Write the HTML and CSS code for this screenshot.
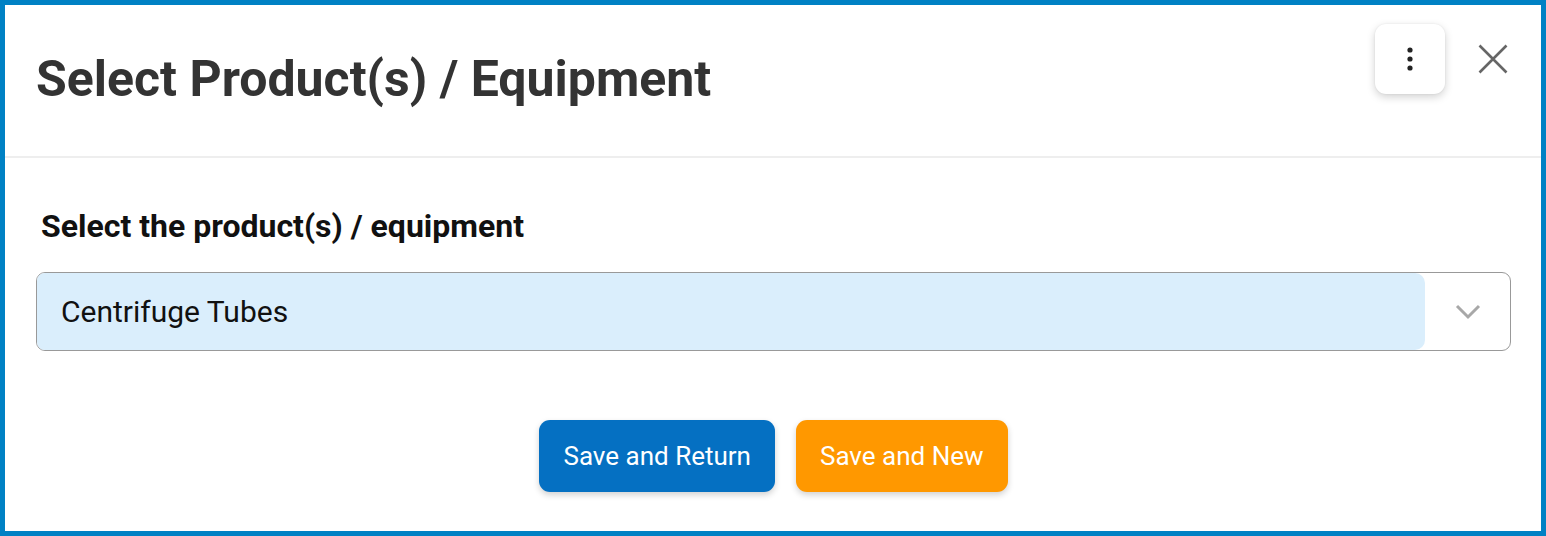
FILE: index.html
```html
<!DOCTYPE html>
<html>
<head>
<meta charset="utf-8">
<link rel="stylesheet" href="styles.css">
</head>
<body>
<div class="dialog">
  <header class="dialog-header">
    <h1 class="dialog-title">Select Product(s) / Equipment</h1>
    <div class="header-actions">
      <button class="menu-btn" aria-label="More">
        <svg width="6" height="24" viewBox="0 0 6 24"><circle cx="3" cy="3" r="2.6" fill="#222"/><circle cx="3" cy="12" r="2.6" fill="#222"/><circle cx="3" cy="21" r="2.6" fill="#222"/></svg>
      </button>
      <button class="close-btn" aria-label="Close">
        <svg width="30" height="30" viewBox="0 0 30 30"><path d="M1.5 1.5 L28.5 28.5 M28.5 1.5 L1.5 28.5" stroke="#666" stroke-width="2.6" fill="none"/></svg>
      </button>
    </div>
  </header>
  <main class="dialog-body">
    <label class="field-label">Select the product(s) / equipment</label>
    <div class="select">
      <div class="select-value">Centrifuge Tubes</div>
      <div class="select-arrow">
        <svg width="26" height="16" viewBox="0 0 26 16"><path d="M2 2 L13 13 L24 2" stroke="#a8a8a8" stroke-width="3" fill="none"/></svg>
      </div>
    </div>
    <div class="actions">
      <button class="btn btn-primary">Save and Return</button>
      <button class="btn btn-warning">Save and New</button>
    </div>
  </main>
</div>
</body>
</html>
```
FILE: styles.css
```css
html, body {
  margin: 0;
  padding: 0;
  background: #fff;
  font-family: Roboto, "Liberation Sans", sans-serif;
}
.dialog {
  box-sizing: border-box;
  width: 1546px;
  height: 536px;
  border: 5px solid #0081c4;
  background: #fff;
  display: flex;
  flex-direction: column;
}
.dialog-header {
  box-sizing: border-box;
  height: 153px;
  border-bottom: 2px solid #eeeeee;
  display: flex;
  justify-content: space-between;
  align-items: flex-start;
  padding: 0 33px 0 31px;
}
.dialog-title {
  margin: 46px 0 0 0;
  font-size: 50px;
  line-height: 56px;
  font-weight: 700;
  color: #333333;
  letter-spacing: 0;
}
.header-actions {
  display: flex;
  align-items: flex-start;
  gap: 33px;
  padding-top: 19px;
}
.menu-btn {
  width: 70px;
  height: 70px;
  border: none;
  border-radius: 11px;
  background: #fff;
  box-shadow: 0 3px 8px rgba(0,0,0,0.18), 0 0 2px rgba(0,0,0,0.08);
  display: flex;
  align-items: center;
  justify-content: center;
  padding: 0;
}
.close-btn {
  border: none;
  background: none;
  padding: 0;
  margin-top: 20px;
  width: 30px;
  height: 30px;
  display: block;
}
.close-btn svg, .menu-btn svg { display: block; }
.dialog-body {
  flex: 1;
  padding: 0 30px 0 31px;
  display: flex;
  flex-direction: column;
}
.field-label {
  margin: 48px 0 0 5px;
  font-size: 32px;
  line-height: 40px;
  font-weight: 700;
  color: #111;
}
.select {
  margin-top: 26px;
  box-sizing: border-box;
  height: 79px;
  border: 1.5px solid #999;
  border-radius: 9px;
  display: flex;
  align-items: stretch;
  overflow: hidden;
}
.select-value {
  flex: 1;
  background: #daeefc;
  border-radius: 0 10px 10px 0;
  display: flex;
  align-items: center;
  padding-left: 24px;
  font-size: 30px;
  color: #111;
}
.select-arrow {
  width: 85px;
  display: flex;
  align-items: center;
  justify-content: center;
}
.select-arrow svg { display: block; }
.actions {
  margin-top: 69px;
  display: flex;
  justify-content: center;
  gap: 21px;
}
.btn {
  height: 72px;
  border: none;
  border-radius: 11px;
  color: #fff;
  font-family: Roboto, "Liberation Sans", sans-serif;
  font-size: 26px;
  padding: 0 24px;
  box-shadow: 0 3px 6px rgba(0,0,0,0.18);
}
.btn-primary { background: #0570c2; }
.btn-warning { background: #ff9800; }
```
